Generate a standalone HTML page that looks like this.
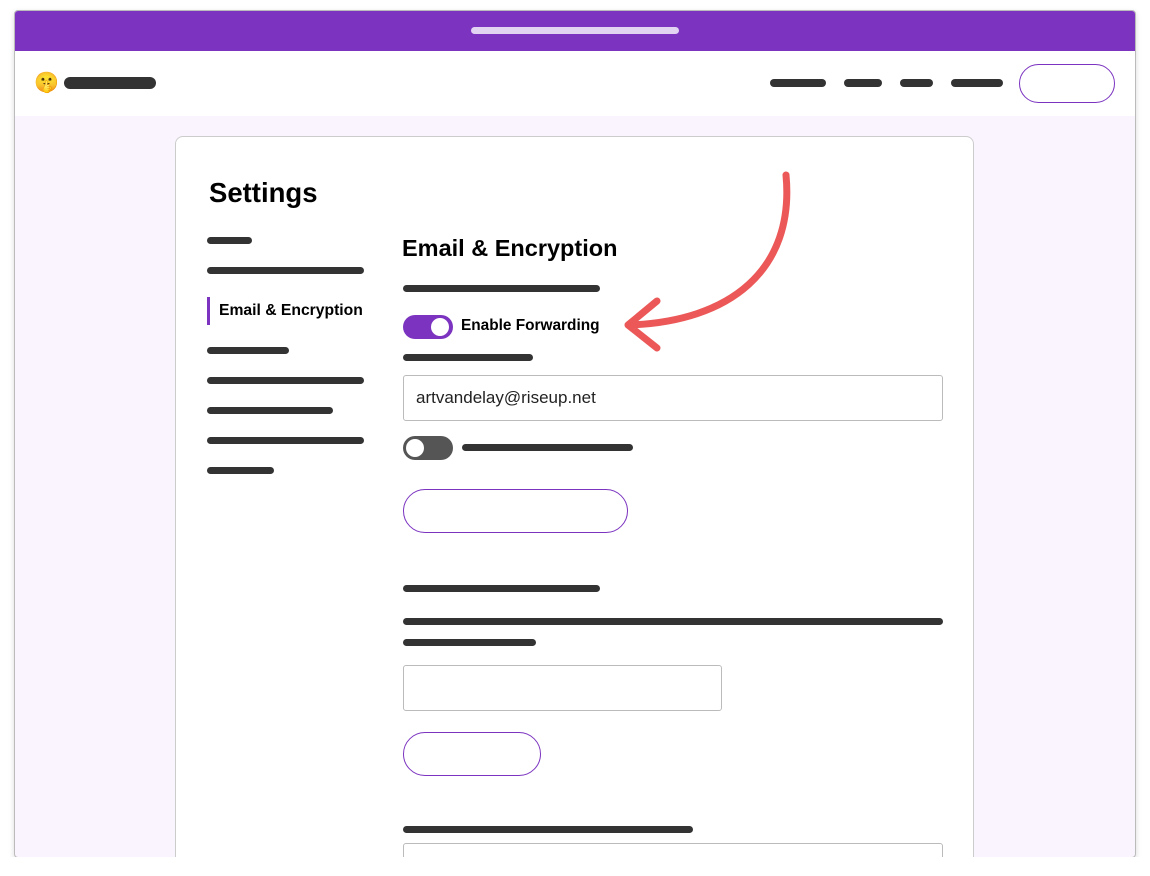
<!DOCTYPE html><html><head><style>
body{margin:0;width:1150px;height:876px;background:#fff;position:relative;overflow:hidden;font-family:"Liberation Sans",sans-serif}
.a{position:absolute}
.b{position:absolute;background:#333;height:7px;border-radius:4px}
</style></head><body>
<div class="a" style="left:14px;top:10px;width:1120px;height:846px;border:1px solid #bbb;border-radius:4px;overflow:hidden;background:#FAF4FE;box-shadow:0 2px 6px rgba(0,0,0,.15)">
 <div class="a" style="left:0;top:0;width:1120px;height:40px;background:#7B33C0"></div>
 <div class="a" style="left:456px;top:16px;width:208px;height:7px;border-radius:4px;background:#E3D3F3"></div>
 <div class="a" style="left:0;top:40px;width:1120px;height:65px;background:#fff"></div>
 <div class="a" style="left:19px;top:59px;font-size:20px">🤫</div>
 <div class="b" style="left:49px;top:66px;width:92px;height:12px;border-radius:6px"></div>
 <div class="b" style="left:755px;top:68px;width:56px;height:8px"></div>
 <div class="b" style="left:829px;top:68px;width:38px;height:8px"></div>
 <div class="b" style="left:885px;top:68px;width:33px;height:8px"></div>
 <div class="b" style="left:936px;top:68px;width:52px;height:8px"></div>
 <div class="a" style="left:1004px;top:53px;width:94px;height:37px;border:1px solid #7B33C0;border-radius:20px;background:#fff"></div>
 <div class="a" style="left:160px;top:125px;width:797px;height:760px;border:1px solid #ccc;border-radius:8px;background:#fff"></div>
</div>
<div class="a" style="left:209px;top:177px;font-size:27.5px;font-weight:bold;color:#000">Settings</div>
<div class="b" style="left:207px;top:237px;width:45px"></div>
<div class="b" style="left:207px;top:267px;width:157px"></div>
<div class="a" style="left:207px;top:297px;width:3px;height:28px;background:#7B33C0"></div>
<div class="a" style="left:219px;top:302px;font-size:15.7px;font-weight:bold">Email &amp; Encryption</div>
<div class="b" style="left:207px;top:347px;width:82px"></div>
<div class="b" style="left:207px;top:377px;width:157px"></div>
<div class="b" style="left:207px;top:407px;width:126px"></div>
<div class="b" style="left:207px;top:437px;width:157px"></div>
<div class="b" style="left:207px;top:467px;width:67px"></div>
<div class="a" style="left:402px;top:235px;font-size:23.5px;font-weight:bold">Email &amp; Encryption</div>
<div class="b" style="left:403px;top:285px;width:197px"></div>
<div class="a" style="left:403px;top:315px;width:50px;height:24px;border-radius:12px;background:#7B33C0"></div>
<div class="a" style="left:431px;top:318px;width:18px;height:18px;border-radius:50%;background:#fff"></div>
<div class="a" style="left:461px;top:317px;font-size:15.4px;font-weight:bold">Enable Forwarding</div>
<div class="b" style="left:403px;top:354px;width:130px"></div>
<div class="a" style="left:403px;top:375px;width:538px;height:44px;border:1px solid #bbb;border-radius:3px"></div>
<div class="a" style="left:416px;top:388px;font-size:17px;color:#222">artvandelay@riseup.net</div>
<div class="a" style="left:403px;top:436px;width:50px;height:24px;border-radius:12px;background:#555"></div>
<div class="a" style="left:406px;top:439px;width:18px;height:18px;border-radius:50%;background:#fff"></div>
<div class="b" style="left:462px;top:444px;width:171px"></div>
<div class="a" style="left:403px;top:489px;width:223px;height:42px;border:1px solid #7B33C0;border-radius:22px"></div>
<div class="b" style="left:403px;top:585px;width:197px"></div>
<div class="b" style="left:403px;top:618px;width:540px"></div>
<div class="b" style="left:403px;top:639px;width:133px"></div>
<div class="a" style="left:403px;top:665px;width:317px;height:44px;border:1px solid #bbb;border-radius:3px"></div>
<div class="a" style="left:403px;top:732px;width:136px;height:42px;border:1px solid #7B33C0;border-radius:22px"></div>
<div class="b" style="left:403px;top:826px;width:290px"></div>
<div class="a" style="left:403px;top:843px;width:538px;height:30px;border:1px solid #bbb;border-radius:3px"></div>
<div class="a" style="left:0;top:857px;width:1150px;height:19px;background:#fff"></div>
<svg class="a" style="left:0;top:0" width="1150" height="876"><path d="M786 175 C795 270 730 322 628 325 M657 301 L628 325 L657 348" fill="none" stroke="#EC5858" stroke-width="7" stroke-linecap="round" stroke-linejoin="round"/></svg>
</body></html>
